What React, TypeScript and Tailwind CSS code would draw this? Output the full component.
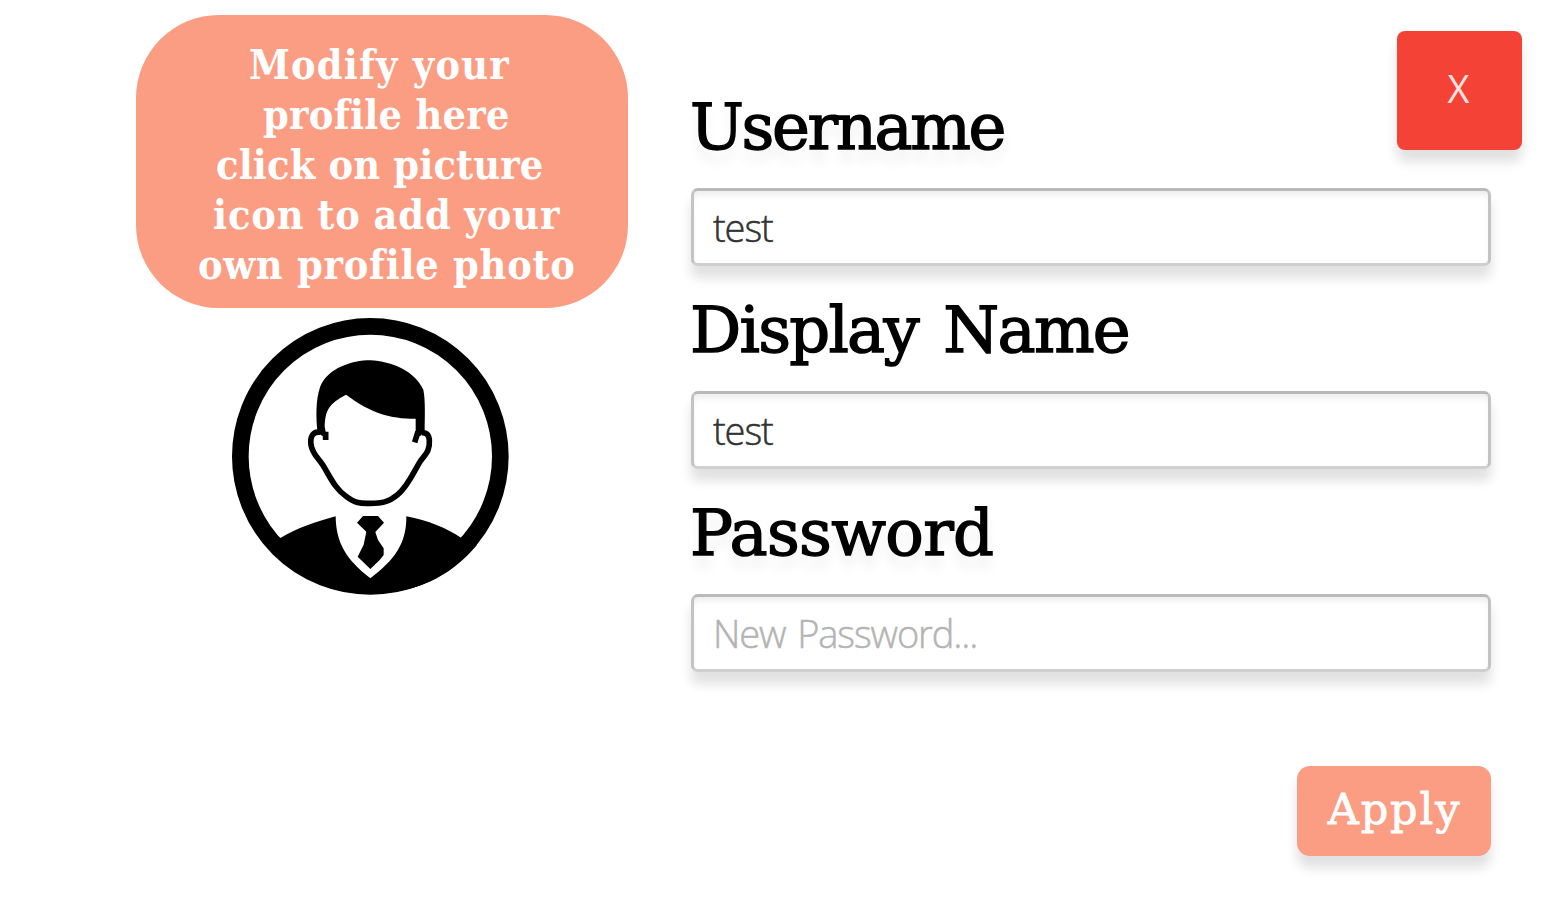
import React from "react";

const helpLines = [
  { text: "Modify your", cls: "ml-[113px] tracking-[1.2px]" },
  { text: "profile here", cls: "ml-[127px] tracking-[0.3px]" },
  { text: "click on picture", cls: "ml-[80px] tracking-[0.18px]" },
  { text: "icon to add your", cls: "ml-[77px] tracking-[0.9px] [word-spacing:-1px]" },
  { text: "own profile photo", cls: "ml-[62px] tracking-[0.75px]" },
];

const condensed = "font-['DejaVu_Serif_Condensed','DejaVu_Serif',serif]";
const serif = "font-['DejaVu_Serif',serif]";
const labelClass =
  "-ml-[1px] block w-max text-[64px] leading-[80px] text-black [-webkit-text-stroke:1.4px_#000]";

function Avatar() {
  return (
    <svg viewBox="0 0 900 900" className="h-[300px] w-[300px]" aria-label="Profile picture">
      <circle cx="451" cy="439" r="390" fill="none" stroke="#000" strokeWidth="50" />
      <path d="M160 675L181 684C235 652 282 638 347 619C348 700 380 750 451 805C524 750 560 700 559 619C625 632 680 654 724 684L760 675L770 706C690 802 585 851 451 851C315 851 225 797 140 700Z" />
      <path d="M293 368C288 330 286 270 301 229C325 174 395 151 451 151C515 154 584 183 610 239C617 273 614 325 614 362L602 377L587 381V326C507 326 455 310 378 254C326 282 316 300 314 350L322 389L306 377Z" />
      <path d="M302 367C278 362 270 381 273 405C278 432 292 441 307 463C331 501 344 535 377 558C410 583 425 580 451 580C484 580 506 577 533 554C566 526 581 485 600 455C618 431 630 423 628 390C626 371 618 369 606 367M317 365V390M594 365L584 397" fill="none" stroke="#000" strokeWidth="17" />
      <path d="M429 618H474L492 638L466 666L474 690L491 715V735L479 750L451 777L413 740L431 704L439 665L411 638Z" />
    </svg>
  );
}

const inputClass =
  "block h-[78px] w-[800px] rounded-[7px] border-[3px] border-t-[#b9b9b9] border-x-[#c3c3c3] border-b-[#cfcfcf] bg-white px-[19px] pb-[1px] font-['Open_Sans','Noto_Sans',sans-serif] font-light text-[38px] tracking-[-1.1px] [word-spacing:3px] text-[#333] [-webkit-text-stroke:0.5px_currentColor] placeholder:text-[#b4b4b4] placeholder:opacity-100 outline-none shadow-[0_12px_12px_rgba(0,0,0,0.12),inset_0_6px_6px_-2px_rgba(0,0,0,0.07)]";

export default function App() {
  return (
    <main className="flex h-[907px] w-[1554px] overflow-hidden bg-white">
      <section className="w-[691px] shrink-0 pl-[136px] pt-[15px]">
        <div className={`h-[293px] w-[492px] rounded-[83px] bg-[#fb9d83] pt-[25px] text-[41px] leading-[50px] font-bold text-white ${condensed}`}>
          {helpLines.map((l) => (
            <div key={l.text} className={`w-max whitespace-pre ${l.cls}`}>{l.text}</div>
          ))}
        </div>
        <div className="ml-[84px] mt-[2px]"><Avatar /></div>
      </section>
      <section className={`w-[831px] pt-[31px] ${serif}`}>
        <div className="flex h-[157px] items-start justify-between">
          <label className={`mt-[56px] tracking-[-2.4px] [text-shadow:0_12px_12px_rgba(0,0,0,0.07)] ${labelClass}`}>Username</label>
          <button className="h-[119px] w-[125px] rounded-[8px] bg-[#f44336] pb-[4px] pr-[2px] font-['Open_Sans','Noto_Sans',sans-serif] text-[38px] text-[#ffe3e0] shadow-[0_12px_12px_rgba(0,0,0,0.12)]">X</button>
        </div>
        <input className={inputClass} defaultValue="test" />
        <div className="h-[125px] pt-[24px]">
          <label className={`tracking-[-1.8px] [word-spacing:7px] ${labelClass}`}>Display Name</label>
        </div>
        <input className={inputClass} defaultValue="test" />
        <div className="h-[125px] pt-[24px]">
          <label className={`tracking-[-0.7px] [text-shadow:0_12px_12px_rgba(0,0,0,0.07)] ${labelClass}`}>Password</label>
        </div>
        <input className={inputClass} placeholder="New Password..." />
        <div className="flex w-[800px] justify-end pt-[94px]">
          <button className="h-[90px] w-[194px] rounded-[13px] bg-[#fb9d83] pb-[3px] pl-[7px] pr-[6px] text-[43px] tracking-[1.9px] text-white [-webkit-text-stroke:0.8px_#fff] shadow-[0_12px_12px_rgba(0,0,0,0.12)]">Apply</button>
        </div>
      </section>
    </main>
  );
}
